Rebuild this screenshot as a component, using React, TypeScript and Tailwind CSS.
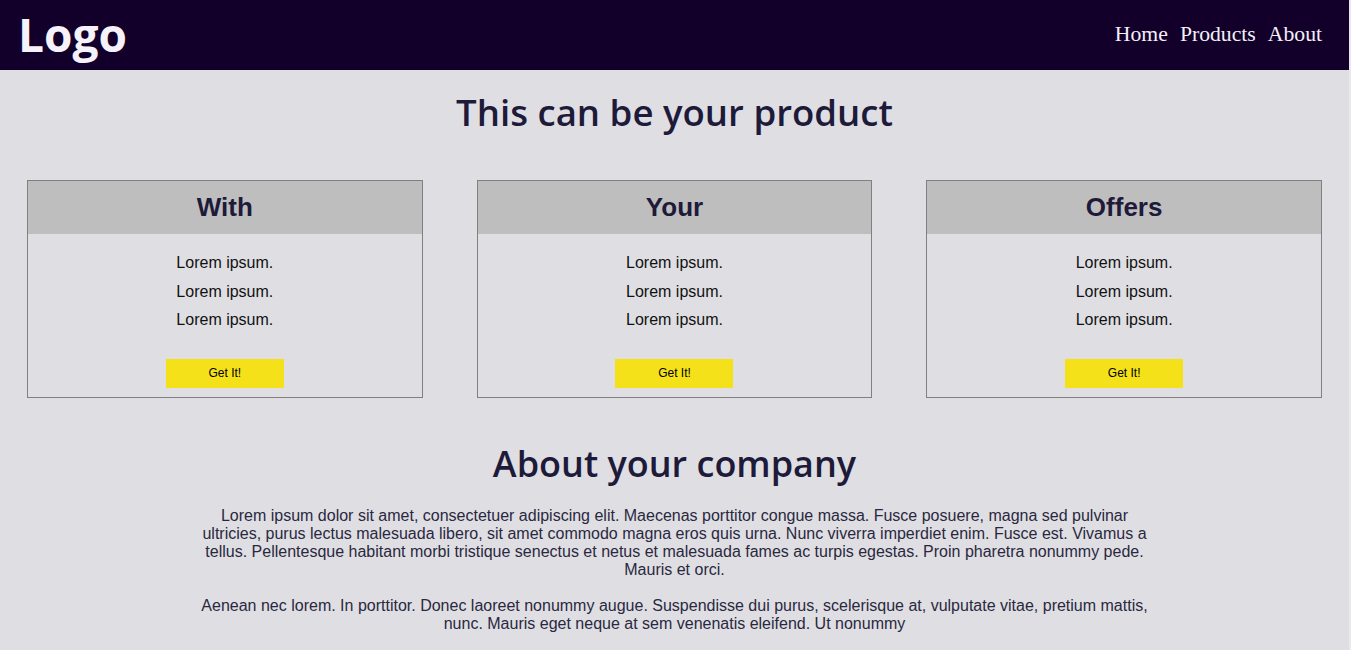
import React from "react";

const lorem1 =
  "Lorem ipsum dolor sit amet, consectetuer adipiscing elit. Maecenas porttitor congue massa. Fusce posuere, magna sed pulvinar ultricies, purus lectus malesuada libero, sit amet commodo magna eros quis urna. Nunc viverra imperdiet enim. Fusce est. Vivamus a tellus. Pellentesque habitant morbi tristique senectus et netus et malesuada fames ac turpis egestas. Proin pharetra nonummy pede. Mauris et orci.";
const lorem2 =
  "Aenean nec lorem. In porttitor. Donec laoreet nonummy augue. Suspendisse dui purus, scelerisque at, vulputate vitae, pretium mattis, nunc. Mauris eget neque at sem venenatis eleifend. Ut nonummy";

function Card({ title }: { title: string }) {
  return (
    <div className="border border-[#808080] flex flex-col">
      <div className="h-[53px] bg-[#bfbebe] flex items-center justify-center">
        <h2 className="text-[26px] font-bold text-[#1d1a3a] font-['Liberation_Sans',Arial,sans-serif]">
          {title}
        </h2>
      </div>
      <div className="flex flex-col items-center pt-[15px] pb-[9px] font-['Liberation_Sans',Arial,sans-serif] text-[16px] text-[#111]">
        <p className="leading-[28.5px]">Lorem ipsum.</p>
        <p className="leading-[28.5px]">Lorem ipsum.</p>
        <p className="leading-[28.5px]">Lorem ipsum.</p>
        <button className="mt-[24px] w-[118px] h-[29px] bg-[#f4e11a] text-[12px] text-black">
          Get It!
        </button>
      </div>
    </div>
  );
}

export default function App() {
  return (
    <div className="flex min-h-[650px] bg-[#e9e9ec]">
      <div className="w-[1349px] min-h-[650px] bg-[#dfdfe3]">
        <header className="h-[70px] bg-[#12002b] flex items-center justify-between pl-[18px] pr-[27px]">
          <div className="text-[46px] font-bold text-[#f6f2fa] font-['Open_Sans',sans-serif] leading-none -mt-[2px]">
            Logo
          </div>
          <nav className="flex gap-[12px] text-[21.7px] text-[#f4f0f8] font-['Liberation_Serif','Times_New_Roman',serif] -mt-[1px]">
            <span>Home</span>
            <span>Products</span>
            <span>About</span>
          </nav>
        </header>
        <h1 className="text-center text-[36.6px] font-semibold text-[#1d1a3a] font-['Open_Sans',sans-serif] mt-[18px] leading-[48px]">
          This can be your product
        </h1>
        <div className="grid grid-cols-3 gap-[54px] px-[27px] mt-[44px]">
          <Card title="With" />
          <Card title="Your" />
          <Card title="Offers" />
        </div>
        <h2 className="text-center text-[36px] font-semibold text-[#1d1a3a] font-['Open_Sans',sans-serif] mt-[42px] leading-[48px]">
          About your company
        </h2>
        <div className="mx-auto w-[950px] text-center text-[16px] leading-[18px] text-[#2a2840] font-['Liberation_Sans',Arial,sans-serif] mt-[19px]">
          <p>{lorem1}</p>
          <p className="mt-[18px]">{lorem2}</p>
        </div>
      </div>
    </div>
  );
}
